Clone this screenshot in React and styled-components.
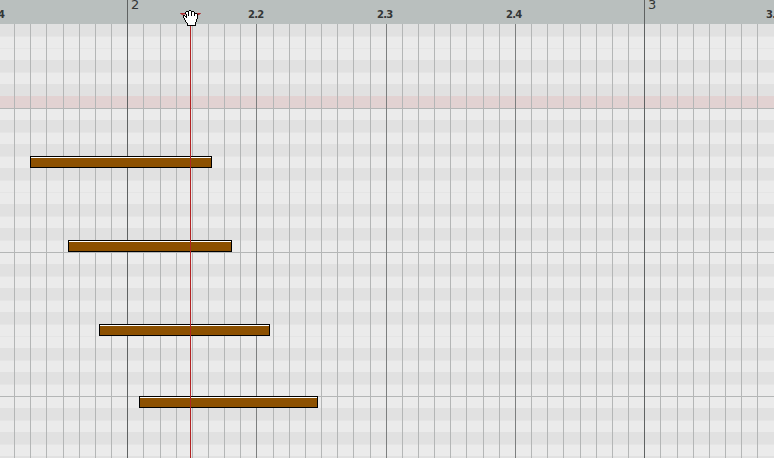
import styled, { createGlobalStyle } from "styled-components";

const barStart = 127.72;
const subWidth = 16.156;
const rowHeight = 12;

const rowPattern = ["light", "dark", "light", "dark", "light", "dark", "light", "light", "dark", "light", "dark", "light"];
const rowColors = { light: "#ebebeb", dark: "#e1e1e1", pink: "#e2d2d2" };

const notes = [
  { left: 30, width: 182, row: 11 },
  { left: 68, width: 164, row: 18 },
  { left: 99, width: 171, row: 25 },
  { left: 139, width: 179, row: 31 },
];

const beatLabels = [
  { text: "4", left: -2 },
  { text: "2.2", left: 248 },
  { text: "2.3", left: 377 },
  { text: "2.4", left: 506 },
  { text: "3.", left: 766 },
];

const barLabels = [
  { text: "2", left: 131 },
  { text: "3", left: 648 },
];

const handBitmap = [
  "......XX.......",
  "...XXX..XXX....",
  "..X..X..X..X...",
  "..X..X..X..XXX.",
  "...X.X..X..X..X",
  "XX.X.X..X..X..X",
  "X.XX..........X",
  "X..X..........X",
  ".X............X",
  ".X...........X.",
  "..X..........X.",
  "..X..........X.",
  "...X........X..",
  "....X.......X..",
  "....X.......X..",
  "....XXXXXXXXX..",
];

const GlobalStyle = createGlobalStyle`
  html, body {
    margin: 0;
    padding: 0;
    background: #ebebeb;
  }
`;

const Page = styled.div`
  position: relative;
  width: 774px;
  height: 458px;
  overflow: hidden;
  display: flex;
  flex-direction: column;
`;

const Ruler = styled.div`
  position: relative;
  flex: 0 0 24px;
  background: #b9bfbe;
  font-family: "DejaVu Sans", sans-serif;
  color: #333636;
`;

const BeatLabel = styled.span`
  position: absolute;
  top: 9px;
  left: ${(p) => p.$left}px;
  font-size: 10px;
  font-weight: bold;
  line-height: 12px;
  letter-spacing: -0.8px;
`;

const BarLabel = styled.span`
  position: absolute;
  top: -3px;
  left: ${(p) => p.$left}px;
  font-size: 13px;
  line-height: 16px;
`;

const Roll = styled.div`
  position: relative;
  flex: 1;
`;

const Row = styled.div`
  box-sizing: border-box;
  height: ${rowHeight}px;
  background: ${(p) => rowColors[p.$tone]};
  border-top: 1px solid ${(p) => (p.$octave ? "#b4b6b6" : p.$tone === "light" ? "#e5e5e5" : rowColors[p.$tone])};
`;

const GridLine = styled.div`
  position: absolute;
  top: ${(p) => (p.$kind === "bar" ? -24 : 0)}px;
  bottom: 0;
  width: 1px;
  background: ${(p) => (p.$kind === "bar" ? "#5f6262" : p.$kind === "beat" ? "#7d7f7f" : "#b4b6b6")};
`;

const Note = styled.div`
  position: absolute;
  box-sizing: border-box;
  height: ${rowHeight}px;
  left: ${(p) => p.$left}px;
  width: ${(p) => p.$width}px;
  top: ${(p) => p.$row * rowHeight}px;
  background: #8c5000;
  border: 1px solid #000;
  &::before {
    content: "";
    display: block;
    height: 1px;
    background: #fff;
  }
`;

const Playhead = styled.div`
  position: absolute;
  left: 190px;
  top: 0;
  bottom: 0;
  width: 1px;
  background: #b22222;
`;

const Marker = styled.svg`
  position: absolute;
  left: 180px;
  top: 13px;
`;

const Hand = styled.svg`
  position: absolute;
  left: 183px;
  top: 10px;
`;

function HandCursor() {
  const pixels = [];
  handBitmap.forEach((line, y) => {
    const first = line.indexOf("X");
    const last = line.lastIndexOf("X");
    pixels.push(<rect key={`f${y}`} x={first} y={y} width={last - first + 1} height={1} fill="#fff" />);
    [...line].forEach((c, x) => {
      if (c === "X") pixels.push(<rect key={`${x}-${y}`} x={x} y={y} width={1} height={1} fill="#000" />);
    });
  });
  return (
    <Hand width="15" height="16" viewBox="0 0 15 16" shapeRendering="crispEdges">
      {pixels}
    </Hand>
  );
}

function GridLines() {
  const lines = [];
  for (let k = -7; k < 40; k++) {
    const kind = k % 32 === 0 ? "bar" : k % 8 === 0 ? "beat" : "sub";
    lines.push(<GridLine key={k} $kind={kind} style={{ left: Math.floor(barStart + k * subWidth) }} />);
  }
  return lines;
}

export default function App() {
  const rows = [];
  for (let i = 0; i < 37; i++) {
    const index = (i + 5) % 12;
    const tone = i === 6 ? "pink" : rowPattern[index];
    rows.push(<Row key={i} $tone={tone} $octave={index === 0} />);
  }

  return (
    <Page>
      <GlobalStyle />
      <Ruler>
        {beatLabels.map((l) => (
          <BeatLabel key={l.text} $left={l.left}>{l.text}</BeatLabel>
        ))}
        {barLabels.map((l) => (
          <BarLabel key={l.text} $left={l.left}>{l.text}</BarLabel>
        ))}
      </Ruler>
      <Roll>
        {rows}
        <GridLines />
        {notes.map((n) => (
          <Note key={n.row} $left={n.left} $width={n.width} $row={n.row} />
        ))}
        <Playhead />
      </Roll>
      <Marker width="21" height="6" viewBox="0 0 21 6">
        <path d="M0.5 0.5H20.5L10.5 6Z" fill="#c98a8c" stroke="#a82a2e" strokeWidth="1" />
      </Marker>
      <HandCursor />
    </Page>
  );
}
